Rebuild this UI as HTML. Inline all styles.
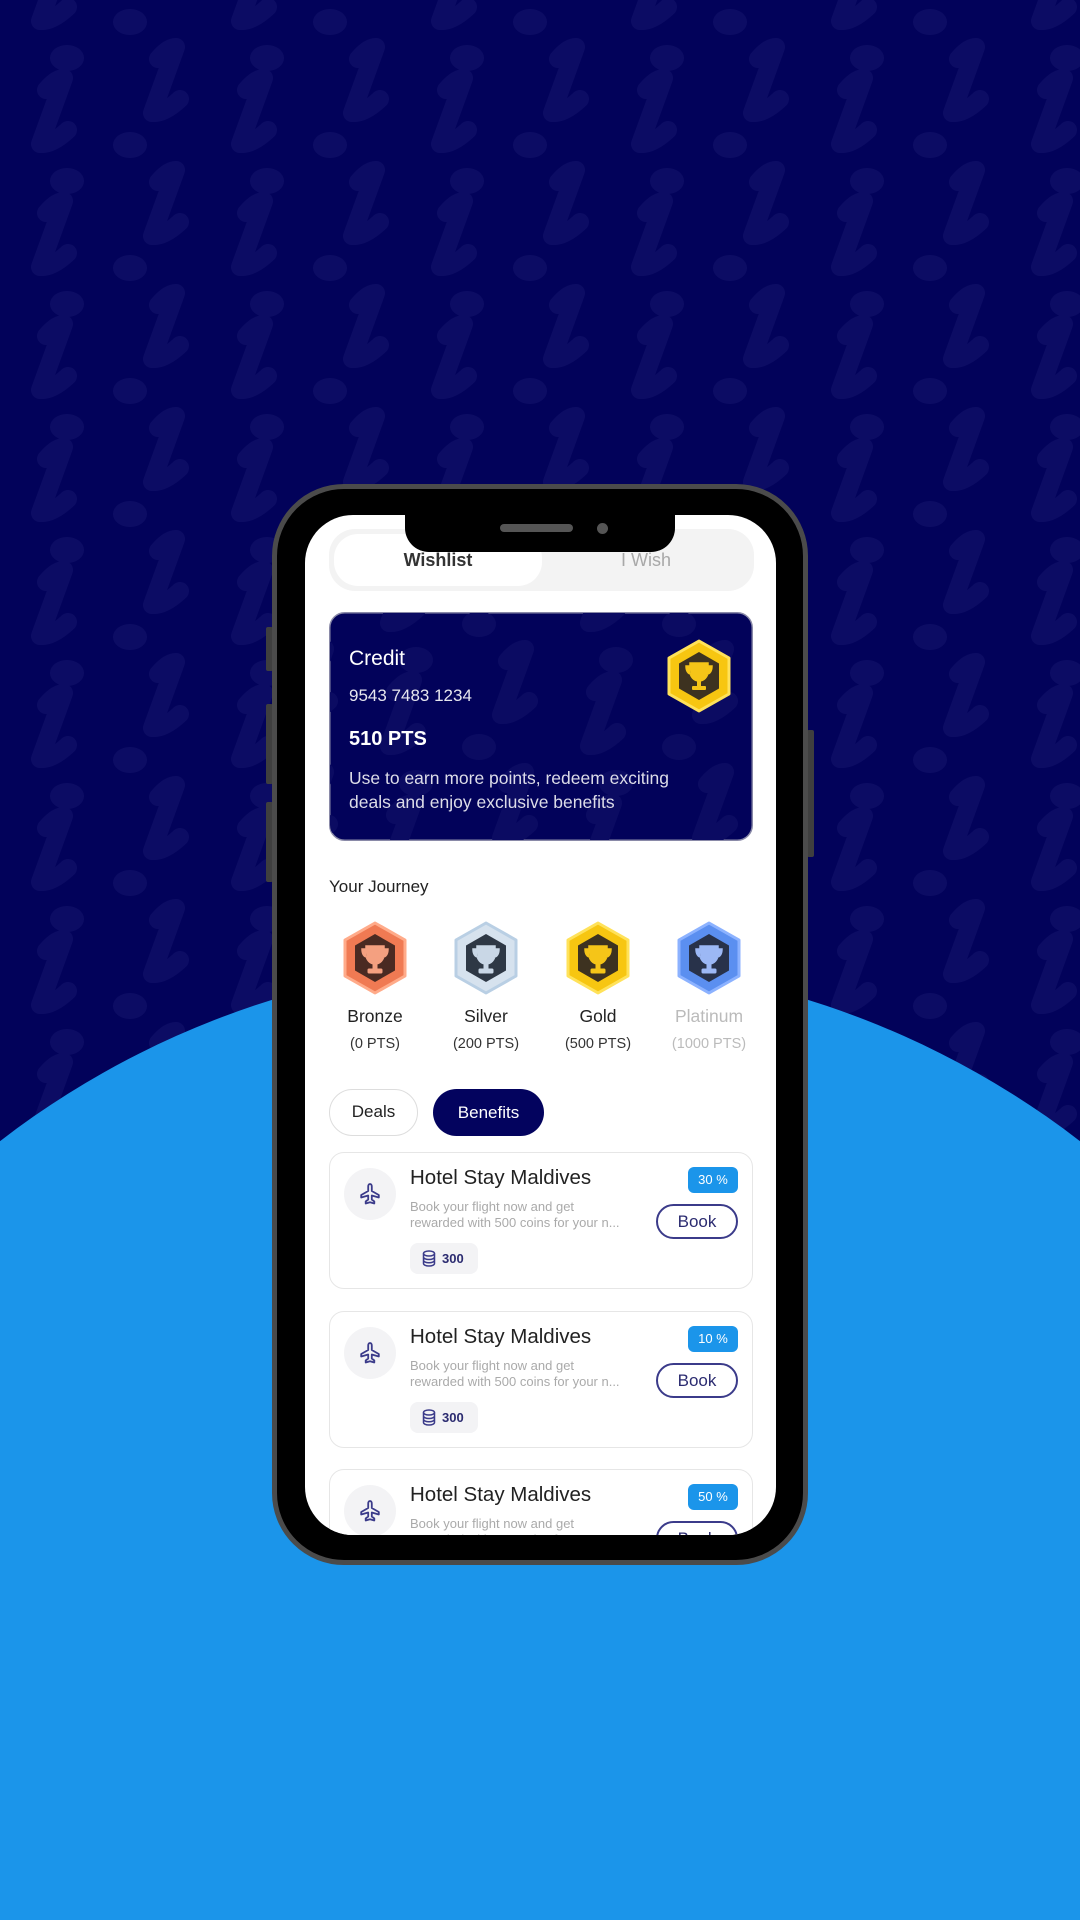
<!DOCTYPE html>
<html><head><meta charset="utf-8">
<style>
*{margin:0;padding:0;box-sizing:border-box}
html,body{width:1080px;height:1920px;overflow:hidden;background:#02025a}
body{font-family:"Liberation Sans",sans-serif}
#wrap{position:relative;width:1080px;height:1920px;overflow:hidden;background:#02025a}
.abs{position:absolute}
.bg{position:absolute;left:0;top:0}
.phone{position:absolute;left:272px;top:484px;width:536px;height:1081px;border-radius:72px;background:#000;border:5px solid #4b4b4b}
.btn{position:absolute;background:#3f3f3f;border-radius:2px}
.screen{position:absolute;left:305px;top:515px;width:471px;height:1020px;border-radius:48px;background:#fff;overflow:hidden}
.notch{position:absolute;left:405px;top:510px;width:270px;height:42px;background:#000;border-radius:0 0 24px 24px}
.t{position:absolute;white-space:nowrap}
.card{position:absolute;left:24px;width:424px;height:137px;border:1.5px solid #e6e6e6;border-radius:15px;background:#fff}
.ttl{position:absolute;left:105px;top:14px;font-size:20.5px;color:#222;white-space:nowrap}
.dsc{position:absolute;left:105px;top:47px;font-size:13px;line-height:16px;color:#aaa;white-space:nowrap}
</style></head><body><div id="wrap">
<svg class="bg" width="1080" height="1920" viewBox="0 0 1080 1920">
<defs>
<g id="ib"><path d="M46 94 Q56 82 64 82 L40 148 Q52 149 68 134" fill="none" stroke-width="18" stroke-linecap="round" stroke-linejoin="round"/></g>
<pattern id="pi" width="200" height="123" patternUnits="userSpaceOnUse">
<g fill="#0c0c64" stroke="#0c0c64">
<ellipse cx="67" cy="58" rx="17" ry="13" stroke="none"/>
<use href="#ib" transform="translate(0,-4)"/>
<use href="#ib" transform="translate(0,-127)"/>
<ellipse cx="130" cy="22" rx="17" ry="13" stroke="none"/>
<ellipse cx="130" cy="145" rx="17" ry="13" stroke="none"/>
<use href="#ib" transform="translate(112,-35)"/>
<use href="#ib" transform="translate(112,88)"/>
</g>
</pattern>
<pattern id="pc2" width="200" height="123" patternUnits="userSpaceOnUse" x="20" y="-10">
<g fill="#0b0b62" stroke="#0b0b62">
<ellipse cx="67" cy="58" rx="17" ry="13" stroke="none"/>
<use href="#ib" transform="translate(0,-4)"/>
<use href="#ib" transform="translate(0,-127)"/>
<ellipse cx="130" cy="22" rx="17" ry="13" stroke="none"/>
<ellipse cx="130" cy="145" rx="17" ry="13" stroke="none"/>
<use href="#ib" transform="translate(112,-35)"/>
<use href="#ib" transform="translate(112,88)"/>
</g>
</pattern>
</defs>
<rect width="1080" height="1920" fill="#02025a"/>
<rect width="1080" height="1300" fill="url(#pi)"/>
<ellipse cx="540" cy="1759" rx="850" ry="800" fill="#1b95ea"/>
</svg>

<div class="btn" style="left:266px;top:627px;width:7px;height:44px"></div>
<div class="btn" style="left:266px;top:704px;width:7px;height:80px"></div>
<div class="btn" style="left:266px;top:802px;width:7px;height:80px"></div>
<div class="btn" style="left:807px;top:730px;width:7px;height:127px"></div>
<div class="phone"></div>
<div class="screen">
  <div class="abs" style="left:24px;top:14px;width:425px;height:62px;background:#f3f3f3;border-radius:26px"></div>
  <div class="abs" style="left:29px;top:19px;width:208px;height:52px;background:#fff;border-radius:24px"></div>
  <div class="t" style="left:29px;width:208px;text-align:center;top:35px;font-size:18px;font-weight:bold;color:#333">Wishlist</div>
  <div class="t" style="left:237px;width:208px;text-align:center;top:35px;font-size:18px;color:#a8a8a8">I Wish</div>
  <svg class="abs" style="left:24px;top:97px" width="424" height="229">
    <rect x="0.75" y="0.75" width="422.5" height="227.5" rx="15" fill="#02025a" stroke="#8a8aa8" stroke-width="1.5"/>
    <rect x="1" y="1" width="422" height="227" rx="15" fill="url(#pc2)"/>
  </svg>
  <div class="t" style="left:44px;top:132px;font-size:21px;color:#fff">Credit</div>
  <div class="t" style="left:44px;top:171px;font-size:17px;color:#e6e6ee">9543 7483 1234</div>
  <div class="t" style="left:44px;top:213px;font-size:20px;font-weight:bold;color:#fff">510 PTS</div>
  <div class="t" style="left:44px;top:251px;font-size:17.5px;line-height:24px;color:#dcdce8">Use to earn more points, redeem exciting<br>deals and enjoy exclusive benefits</div>
  <svg class="abs" style="left:360px;top:124px" width="68" height="74" viewBox="0 0 68 74">
    <polygon points="34,2 64,19 64,55 34,72 4,55 4,19" fill="#f7c611" stroke="#ffe25a" stroke-width="3" stroke-linejoin="round"/>
    <polygon points="34,13 54,24.5 54,49.5 34,61 14,49.5 14,24.5" fill="#3d3220"/>
    <path d="M25 24h18v8c0 6-4 10-9 10s-9-4-9-10z M25 27h-4c0 5 2 8 5 8 M43 27h4c0 5-2 8-5 8" fill="#f5c518" stroke="#f5c518" stroke-width="1.5"/>
    <rect x="32" y="41" width="4" height="6" fill="#f5c518"/><rect x="27" y="47" width="14" height="4" rx="1" fill="#f5c518"/>
  </svg>
  <div class="t" style="left:24px;top:362px;font-size:17px;color:#222">Your Journey</div>
  <svg class="abs" style="left:36px;top:405px" width="420" height="76" viewBox="0 0 420 76">
    <defs><g id="tr"><path d="M-9 -12h18v8c0 6-4 10-9 10s-9-4-9-10z M-9 -9h-4c0 5 2 8 5 8 M9 -9h4c0 5-2 8-5 8" stroke-width="1.5"/><rect x="-2" y="5" width="4" height="6"/><rect x="-7" y="11" width="14" height="4" rx="1"/></g></defs>
    <g transform="translate(34,0)"><polygon points="0,3 30,20 30,56 0,73 -30,56 -30,20" fill="#f07a53" stroke="#ffab8a" stroke-width="3" stroke-linejoin="round"/><polygon points="0,14 20,25.5 20,50.5 0,62 -20,50.5 -20,25.5" fill="#4a2a22"/><g transform="translate(0,38)" fill="#f4a080" stroke="#f4a080"><use href="#tr"/></g></g>
    <g transform="translate(145,0)"><polygon points="0,3 30,20 30,56 0,73 -30,56 -30,20" fill="#d6e2ee" stroke="#b9cfe4" stroke-width="3" stroke-linejoin="round"/><polygon points="0,14 20,25.5 20,50.5 0,62 -20,50.5 -20,25.5" fill="#2e3845"/><g transform="translate(0,38)" fill="#c9d7e6" stroke="#c9d7e6"><use href="#tr"/></g></g>
    <g transform="translate(257,0)"><polygon points="0,3 30,20 30,56 0,73 -30,56 -30,20" fill="#f7c611" stroke="#ffe25a" stroke-width="3" stroke-linejoin="round"/><polygon points="0,14 20,25.5 20,50.5 0,62 -20,50.5 -20,25.5" fill="#3d3220"/><g transform="translate(0,38)" fill="#f5c518" stroke="#f5c518"><use href="#tr"/></g></g>
    <g transform="translate(368,0)"><polygon points="0,3 30,20 30,56 0,73 -30,56 -30,20" fill="#5b8ff0" stroke="#8cb2ff" stroke-width="3" stroke-linejoin="round"/><polygon points="0,14 20,25.5 20,50.5 0,62 -20,50.5 -20,25.5" fill="#28324a"/><g transform="translate(0,38)" fill="#9cb8f5" stroke="#9cb8f5"><use href="#tr"/></g></g>
  </svg>
  <div class="t" style="left:20px;width:100px;text-align:center;top:491px;font-size:17.5px;color:#222">Bronze</div>
  <div class="t" style="left:131px;width:100px;text-align:center;top:491px;font-size:17.5px;color:#222">Silver</div>
  <div class="t" style="left:243px;width:100px;text-align:center;top:491px;font-size:17.5px;color:#222">Gold</div>
  <div class="t" style="left:354px;width:100px;text-align:center;top:491px;font-size:17.5px;color:#bbb">Platinum</div>
  <div class="t" style="left:20px;width:100px;text-align:center;top:521px;font-size:14.5px;color:#333">(0 PTS)</div>
  <div class="t" style="left:131px;width:100px;text-align:center;top:521px;font-size:14.5px;color:#333">(200 PTS)</div>
  <div class="t" style="left:243px;width:100px;text-align:center;top:521px;font-size:14.5px;color:#333">(500 PTS)</div>
  <div class="t" style="left:354px;width:100px;text-align:center;top:521px;font-size:14.5px;color:#bbb">(1000 PTS)</div>
  <div class="abs" style="left:24px;top:574px;width:89px;height:47px;border:1.5px solid #ddd;border-radius:24px;text-align:center;line-height:44px;font-size:17px;color:#222">Deals</div>
  <div class="abs" style="left:128px;top:574px;width:111px;height:47px;background:#03035e;border-radius:24px;text-align:center;line-height:47px;font-size:17px;color:#fff">Benefits</div>
  <div class="card" style="top:637px"></div>
  <div class="card" style="top:796px"></div>
  <div class="card" style="top:954px"></div>

  <div class="abs" style="left:0;top:637px;width:471px;height:137px">
    <div class="abs" style="left:39px;top:16px;width:52px;height:52px;border-radius:50%;background:#f3f3f5"></div>
    <svg class="abs" style="left:53px;top:30px" width="24" height="24" viewBox="0 0 24 24"><path d="M12 2c1.2 0 1.8 1.3 1.8 3v4l7 4v2.5l-7-2v4l2.5 2v2l-4.3-1.2-4.3 1.2v-2l2.5-2v-4l-7 2v-2.5l7-4v-4c0-1.7.6-3 1.8-3z" fill="none" stroke="#3b3b8a" stroke-width="1.8" stroke-linejoin="round"/></svg>
    <div class="ttl">Hotel Stay Maldives</div>
    <div class="dsc">Book your flight now and get<br>rewarded with 500 coins for your n...</div>
    <div class="abs" style="left:105px;top:91px;width:68px;height:31px;border-radius:8px;background:#f3f3f5"></div>
    <svg class="abs" style="left:117px;top:98px" width="14" height="17" viewBox="0 0 14 17"><g fill="none" stroke="#3b3b8a" stroke-width="1.5"><ellipse cx="7" cy="3.5" rx="5.5" ry="2.5"/><path d="M1.5 3.5v10c0 1.4 2.5 2.5 5.5 2.5s5.5-1.1 5.5-2.5v-10M1.5 7c0 1.4 2.5 2.5 5.5 2.5s5.5-1.1 5.5-2.5M1.5 10.3c0 1.4 2.5 2.5 5.5 2.5s5.5-1.1 5.5-2.5"/></g></svg>
    <div class="t" style="left:137px;top:99px;font-size:13px;font-weight:bold;color:#2b2b70">300</div>
    <div class="abs" style="left:383px;top:15px;width:50px;height:26px;border-radius:6px;background:#1b95ea;color:#fff;font-size:13px;text-align:center;line-height:26px">30 %</div>
    <div class="abs" style="left:351px;top:52px;width:82px;height:35px;border:2px solid #3b3b8a;border-radius:18px;color:#2b2b70;font-size:17px;text-align:center;line-height:31px">Book</div>
  </div>
  <div class="abs" style="left:0;top:796px;width:471px;height:137px">
    <div class="abs" style="left:39px;top:16px;width:52px;height:52px;border-radius:50%;background:#f3f3f5"></div>
    <svg class="abs" style="left:53px;top:30px" width="24" height="24" viewBox="0 0 24 24"><path d="M12 2c1.2 0 1.8 1.3 1.8 3v4l7 4v2.5l-7-2v4l2.5 2v2l-4.3-1.2-4.3 1.2v-2l2.5-2v-4l-7 2v-2.5l7-4v-4c0-1.7.6-3 1.8-3z" fill="none" stroke="#3b3b8a" stroke-width="1.8" stroke-linejoin="round"/></svg>
    <div class="ttl">Hotel Stay Maldives</div>
    <div class="dsc">Book your flight now and get<br>rewarded with 500 coins for your n...</div>
    <div class="abs" style="left:105px;top:91px;width:68px;height:31px;border-radius:8px;background:#f3f3f5"></div>
    <svg class="abs" style="left:117px;top:98px" width="14" height="17" viewBox="0 0 14 17"><g fill="none" stroke="#3b3b8a" stroke-width="1.5"><ellipse cx="7" cy="3.5" rx="5.5" ry="2.5"/><path d="M1.5 3.5v10c0 1.4 2.5 2.5 5.5 2.5s5.5-1.1 5.5-2.5v-10M1.5 7c0 1.4 2.5 2.5 5.5 2.5s5.5-1.1 5.5-2.5M1.5 10.3c0 1.4 2.5 2.5 5.5 2.5s5.5-1.1 5.5-2.5"/></g></svg>
    <div class="t" style="left:137px;top:99px;font-size:13px;font-weight:bold;color:#2b2b70">300</div>
    <div class="abs" style="left:383px;top:15px;width:50px;height:26px;border-radius:6px;background:#1b95ea;color:#fff;font-size:13px;text-align:center;line-height:26px">10 %</div>
    <div class="abs" style="left:351px;top:52px;width:82px;height:35px;border:2px solid #3b3b8a;border-radius:18px;color:#2b2b70;font-size:17px;text-align:center;line-height:31px">Book</div>
  </div>
  <div class="abs" style="left:0;top:954px;width:471px;height:66px;overflow:hidden">
    <div class="abs" style="left:39px;top:16px;width:52px;height:52px;border-radius:50%;background:#f3f3f5"></div>
    <svg class="abs" style="left:53px;top:30px" width="24" height="24" viewBox="0 0 24 24"><path d="M12 2c1.2 0 1.8 1.3 1.8 3v4l7 4v2.5l-7-2v4l2.5 2v2l-4.3-1.2-4.3 1.2v-2l2.5-2v-4l-7 2v-2.5l7-4v-4c0-1.7.6-3 1.8-3z" fill="none" stroke="#3b3b8a" stroke-width="1.8" stroke-linejoin="round"/></svg>
    <div class="ttl">Hotel Stay Maldives</div>
    <div class="dsc">Book your flight now and get<br>rewarded with 500 coins for your n...</div>
    <div class="abs" style="left:383px;top:15px;width:50px;height:26px;border-radius:6px;background:#1b95ea;color:#fff;font-size:13px;text-align:center;line-height:26px">50 %</div>
    <div class="abs" style="left:351px;top:52px;width:82px;height:35px;border:2px solid #3b3b8a;border-radius:18px;color:#2b2b70;font-size:17px;text-align:center;line-height:31px">Book</div>
  </div>
</div>
<div class="notch"></div>
<div class="abs" style="left:500px;top:524px;width:73px;height:8px;border-radius:4px;background:#555"></div>
<div class="abs" style="left:597px;top:523px;width:11px;height:11px;border-radius:50%;background:#555"></div>
</div></body></html>
